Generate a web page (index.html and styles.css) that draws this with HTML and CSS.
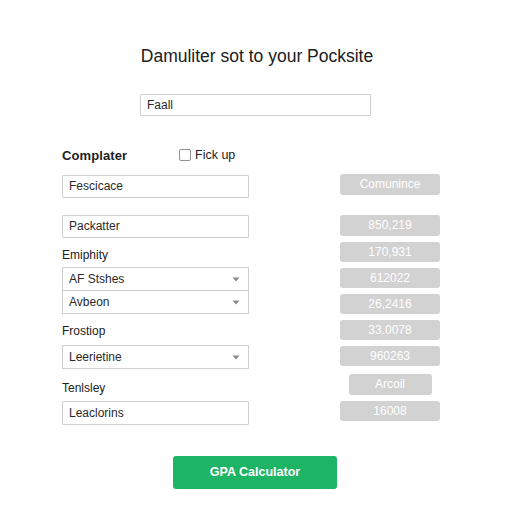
FILE: index.html
```html
<!DOCTYPE html>
<html>
<head>
<meta charset="utf-8">
<link rel="stylesheet" href="styles.css">
</head>
<body>
<div class="page">
  <h1 class="title">Damuliter sot to your Pocksite</h1>
  <div class="top-field"><div class="field wide">Faall</div></div>
  <div class="columns">
    <div class="left">
      <div class="head-row">
        <span class="strong-label">Complater</span>
        <span class="check"><span class="box"></span>Fick up</span>
      </div>
      <div class="field f1">Fescicace</div>
      <div class="field f2">Packatter</div>
      <div class="label l1">Emiphity</div>
      <div class="select-group g1">
        <div class="sel">AF Stshes<svg class="chev" width="8" height="5" viewBox="0 0 8 5"><path d="M0.5 0.5 L7.5 0.5 L4 4.5 Z" fill="#8a8a8a"/></svg></div>
        <div class="sel">Avbeon<svg class="chev" width="8" height="5" viewBox="0 0 8 5"><path d="M0.5 0.5 L7.5 0.5 L4 4.5 Z" fill="#8a8a8a"/></svg></div>
      </div>
      <div class="label l2">Frostiop</div>
      <div class="select-group g2">
        <div class="sel">Leerietine<svg class="chev" width="8" height="5" viewBox="0 0 8 5"><path d="M0.5 0.5 L7.5 0.5 L4 4.5 Z" fill="#8a8a8a"/></svg></div>
      </div>
      <div class="label l3">Tenlsley</div>
      <div class="field f3">Leaclorins</div>
    </div>
    <div class="right">
      <div class="btn b-first">Comunince</div>
      <div class="btn b-gap">850,219</div>
      <div class="btn">170,931</div>
      <div class="btn">612022</div>
      <div class="btn">26,2416</div>
      <div class="btn">33.0078</div>
      <div class="btn">960263</div>
      <div class="btn narrow">Arcoil</div>
      <div class="btn">16008</div>
    </div>
  </div>
  <div class="cta-row"><div class="cta">GPA Calculator</div></div>
</div>
</body>
</html>
```
FILE: styles.css
```css
html, body {
  margin: 0;
  padding: 0;
  background: #ffffff;
}
body {
  font-family: "Liberation Sans", Arial, sans-serif;
  color: #222;
}
.page {
  width: 512px;
  height: 512px;
  display: flex;
  flex-direction: column;
}
.title {
  margin: 45px 0 0 0;
  font-size: 17.5px;
  line-height: 22px;
  font-weight: normal;
  text-align: center;
  color: #202020;
  padding-left: 2px;
}
.top-field {
  margin-top: 27px;
  padding-left: 140px;
}
.field {
  box-sizing: border-box;
  height: 23px;
  border: 1px solid #cfcfcf;
  border-radius: 1px;
  font-size: 12px;
  line-height: 21px;
  padding-left: 6px;
  color: #2a2a2a;
}
.field.wide {
  width: 231px;
  height: 22px;
  line-height: 20px;
}
.columns {
  display: flex;
  padding-left: 62px;
  gap: 91px;
  margin-top: 32px;
}
.left {
  width: 187px;
  display: flex;
  flex-direction: column;
}
.head-row {
  display: flex;
  align-items: center;
  height: 14px;
}
.strong-label {
  width: 117px;
  font-size: 13px;
  font-weight: bold;
  color: #1e1e1e;
  letter-spacing: 0.1px;
}
.check {
  display: flex;
  align-items: center;
  font-size: 12.5px;
  color: #222;
}
.box {
  width: 10px;
  height: 10px;
  border: 1px solid #8f8f8f;
  border-radius: 2px;
  margin-right: 4px;
}
.f1 { margin-top: 13px; }
.f2 { margin-top: 17px; }
.label {
  font-size: 12px;
  line-height: 14px;
  color: #222;
}
.l1 { margin-top: 10px; }
.l2 { margin-top: 10px; }
.l3 { margin-top: 12px; }
.g1 { margin-top: 5px; }
.g2 { margin-top: 7px; }
.f3 { margin-top: 6px; height: 24px; line-height: 22px; }
.select-group {
  border: 1px solid #cfcfcf;
  display: flex;
  flex-direction: column;
}
.sel {
  height: 22px;
  display: flex;
  align-items: center;
  justify-content: space-between;
  padding: 0 8px 0 6px;
  font-size: 12px;
  color: #2a2a2a;
}
.sel + .sel {
  border-top: 1px solid #cfcfcf;
}
.right {
  width: 100px;
  display: flex;
  flex-direction: column;
  gap: 6px;
  padding-top: 26px;
}
.btn {
  height: 20px;
  border-radius: 3px;
  background: #d2d2d2;
  color: #ffffff;
  font-size: 12px;
  line-height: 20px;
  text-align: center;
}
.b-first { height: 21px; line-height: 21px; }
.b-gap { margin-top: 14px; height: 21px; line-height: 21px; }
.narrow {
  width: 83px;
  align-self: center;
  margin-top: 2px;
  height: 21px;
  line-height: 21px;
}
.cta-row {
  display: flex;
  padding-left: 173px;
  margin-top: 31px;
}
.cta {
  width: 164px;
  height: 33px;
  border-radius: 3px;
  background: #1eb466;
  color: #ffffff;
  font-size: 12.5px;
  font-weight: bold;
  line-height: 33px;
  text-align: center;
}
```
